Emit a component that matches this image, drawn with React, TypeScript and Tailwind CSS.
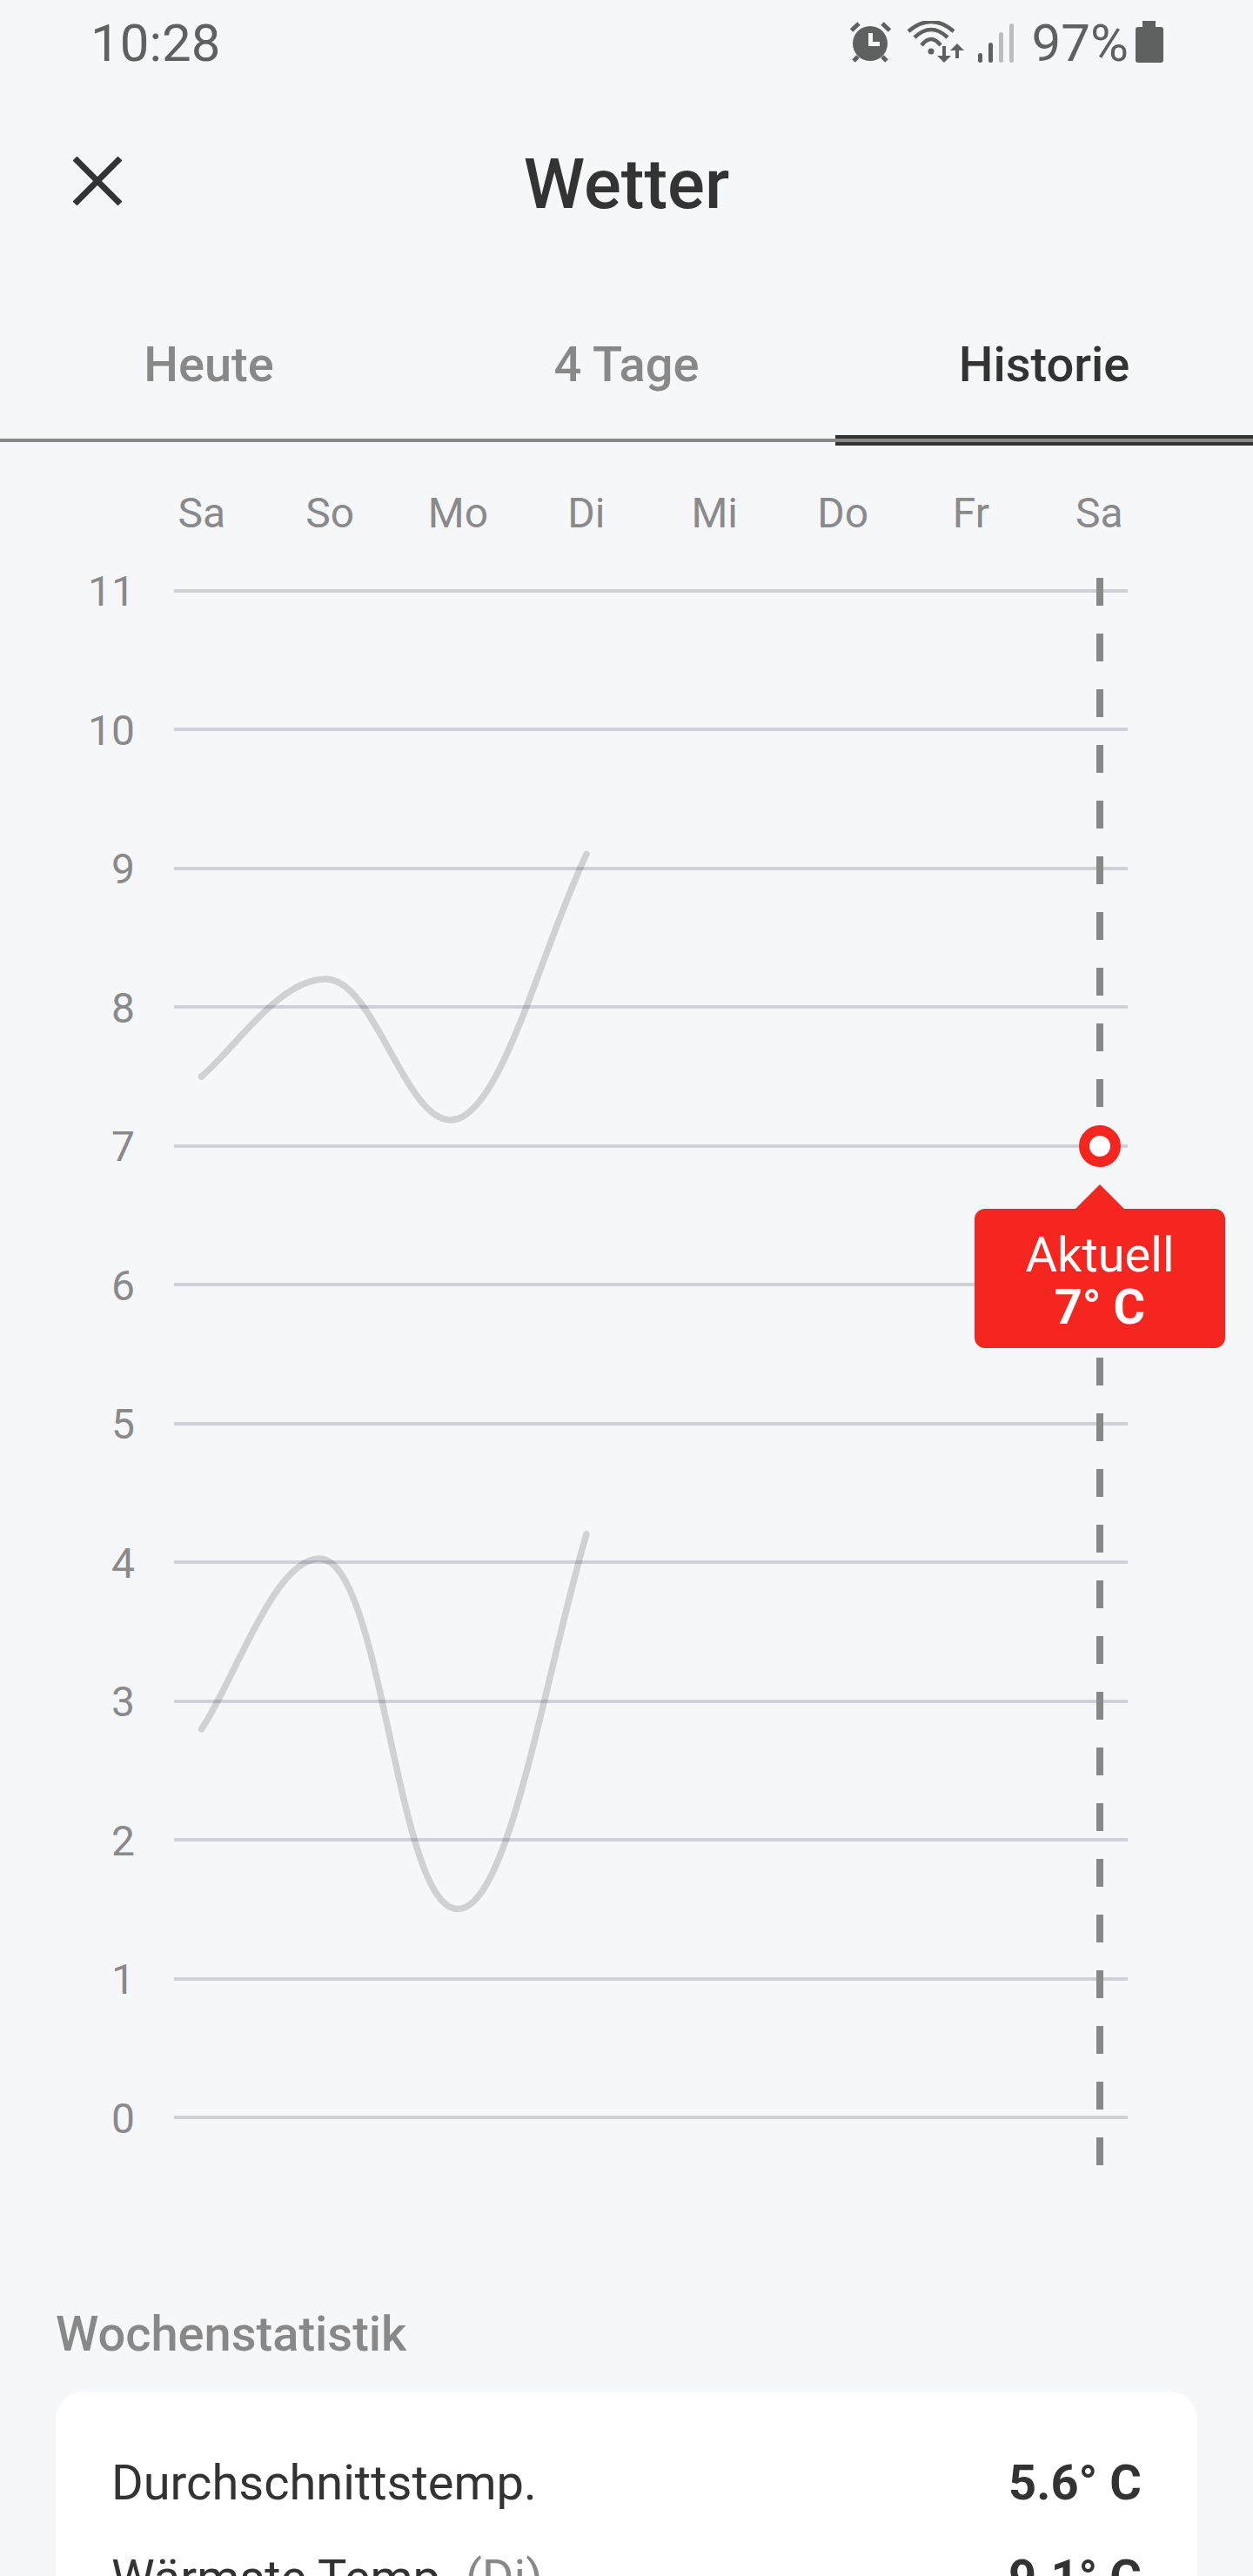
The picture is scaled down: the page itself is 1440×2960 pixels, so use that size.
const font = { fontFamily: 'Roboto, sans-serif' };

const days = ['Sa', 'So', 'Mo', 'Di', 'Mi', 'Do', 'Fr', 'Sa'];
const ticks = [11, 10, 9, 8, 7, 6, 5, 4, 3, 2, 1, 0];

function StatusIcons() {
  return (
    <svg width="196" height="48" viewBox="0 0 196 48" fill="#5f6160">
      {/* alarm */}
      <circle cx="29" cy="26" r="20" />
      <g stroke="#5f6160" strokeWidth="5" fill="none">
        <path d="M7.5 11 16 3M43 3l8.5 8M10 46l5-5M48 46l-5-5" />
      </g>
      <path d="M27 14h5v10h8v5H27z" fill="#f6f7f9" />
      {/* wifi */}
      <g fill="none" stroke="#5f6160" strokeWidth="4.5">
        <path d="M73 12Q99-10 125 12" />
        <path d="M80 19Q99 1 118 19" />
        <path d="M88 28Q99 14 110 28" />
      </g>
      <circle cx="99" cy="35" r="3.5" />
      <path d="M112 29h4v11h6l-8 8-8-8h6zM129 26l8 8h-6v9h-4v-9h-6z" />
      {/* signal */}
      <rect x="153" y="37" width="5" height="11" rx="2.5" />
      <rect x="165" y="25" width="5" height="23" rx="2.5" />
      <rect x="177" y="13" width="5" height="35" rx="2.5" fill="#bcbdbf" />
      <rect x="189" y="3" width="5" height="45" rx="2.5" fill="#bcbdbf" />
    </svg>
  );
}

function Chart() {
  return (
    <div className="relative">
      <div className="grid grid-cols-8 w-[1179px] ml-[158px] text-[48px] leading-[18px] text-[#8a8a8a] text-center pt-[73px]">
        {days.map((d, i) => (
          <span key={i}>{d}</span>
        ))}
      </div>
      <div>
        {ticks.map((t) => (
          <div key={t} className="flex items-center h-[159.5px]">
            <span className="w-[155px] pt-[3px] text-right text-[48px] leading-[52px] text-[#8a8a8a]">{t}</span>
            <div className="ml-[45px] w-[1096px] h-1 bg-[#d0d0d8]" />
          </div>
        ))}
      </div>
      <svg className="absolute left-0 top-0" width="1440" height="2000" viewBox="0 508 1440 2000" fill="none">
        <g stroke="#1f2a2a" strokeOpacity="0.18" strokeWidth="7.5" strokeLinecap="round">
          <path d="M231.5 1237C270 1205 320 1125 374.6 1125C430 1125 465 1287 517.7 1287C575 1287 620 1095 674 981.5" />
          <path d="M231.5 1987C270 1930 315 1791 367 1791C440 1791 455 2193.5 526 2193.5C585 2193.5 625 1930 674 1762.7" />
        </g>
        <line x1="1264" y1="664" x2="1264" y2="2488" stroke="#888888" strokeWidth="8" strokeDasharray="32 32" />
      </svg>
      <div className="absolute left-[1240px] top-[785px] w-12 h-12 rounded-full border-[12px] border-[#f5251f] bg-white" />
      <div className="absolute left-[1120px] top-[881px] w-[288px] h-[160px] rounded-xl bg-[#f5251f] text-white text-center flex flex-col justify-center pt-[6px]">
        <svg className="absolute left-[116px] -top-[28px]" width="56" height="29" viewBox="0 0 56 29" fill="#f5251f">
          <path d="M28 0 56 28v1H0v-1z" />
        </svg>
        <span className="text-[56px] leading-[60px]">Aktuell</span>
        <span className="text-[56px] leading-[60px] font-bold">7° C</span>
      </div>
    </div>
  );
}

export default function App() {
  return (
    <div className="w-[1440px] h-[2960px] overflow-hidden bg-[#f6f7f9]" style={font}>
      <div className="flex items-center justify-between h-[96px] pl-[104px] pr-[103px]">
        <span className="pt-[3px] text-[60px] leading-none text-[#5f6160]">10:28</span>
        <div className="flex items-center">
          <StatusIcons />
          <span className="ml-[19px] pt-[3px] text-[60px] leading-none text-[#5f6160]">97%</span>
          <svg className="ml-2" width="32" height="48" viewBox="0 0 32 48" fill="#5f6160">
            <path d="M8 0h15v7h6a3 3 0 0 1 3 3v35a3 3 0 0 1-3 3H3a3 3 0 0 1-3-3V10a3 3 0 0 1 3-3h5z" />
          </svg>
        </div>
      </div>

      <div className="relative flex items-center justify-center h-[120px] mt-[54px]">
        <svg className="absolute left-[84px] top-[30px]" width="56" height="56" viewBox="0 0 56 56" stroke="#333333" strokeWidth="7">
          <path d="M2 2l52 52M54 2 2 54" />
        </svg>
        <h1 className="pt-[3px] text-[80px] leading-none font-medium text-[#333333]">Wetter</h1>
      </div>

      <div className="relative grid grid-cols-3 h-[238px] border-b-4 border-[#888888] text-[56px] font-medium text-center text-[#888888]">
        <span className="pt-[117px] leading-[64px]">Heute</span>
        <span className="pt-[117px] leading-[64px]">4 Tage</span>
        <span className="pt-[117px] leading-[64px] text-[#333333]">Historie</span>
        <div className="absolute right-0 -bottom-[8px] w-[480px] h-[12px] bg-[#333333] flex items-center">
          <div className="w-full h-1 bg-[#888888]" />
        </div>
      </div>

      <Chart />

      <h2 className="mt-[137px] ml-16 text-[56px] leading-[64px] font-medium text-[#888888]">Wochenstatistik</h2>
      <div className="mx-16 mt-[34px] h-[400px] rounded-[32px] bg-white px-16 pt-[73px]">
        <div className="flex justify-between text-[56px] leading-[64px] text-[#333333]">
          <span>Durchschnittstemp.</span>
          <span className="font-bold">5.6° C</span>
        </div>
        <div className="flex justify-between mt-[45px] text-[56px] leading-[64px] text-[#333333]">
          <span>
            Wärmste Temp. <span className="text-[#888888]">(Di)</span>
          </span>
          <span className="font-bold">9.1° C</span>
        </div>
      </div>
    </div>
  );
}
